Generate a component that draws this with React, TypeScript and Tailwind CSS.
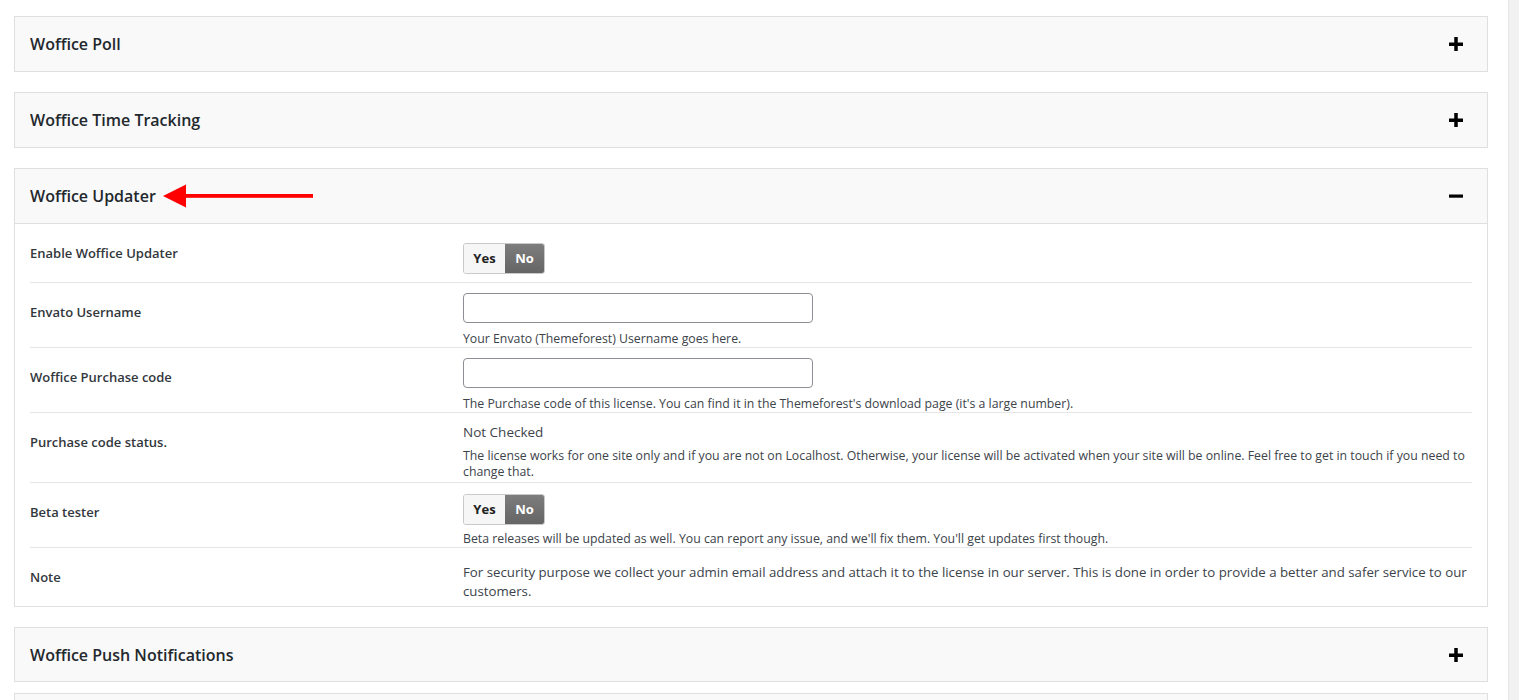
import React from 'react'

const font = { fontFamily: '"Open Sans", "Noto Sans", sans-serif' }

function PlusIcon() {
  return (
    <svg width="14" height="14" viewBox="0 0 14 14" className="block">
      <rect x="0" y="5.5" width="14" height="3.5" fill="#000" />
      <rect x="5.25" y="0" width="3.5" height="14" fill="#000" />
    </svg>
  )
}

function MinusIcon() {
  return (
    <svg width="14" height="14" viewBox="0 0 14 14" className="block">
      <rect x="0" y="5.5" width="14" height="3.2" fill="#000" />
    </svg>
  )
}

function Arrow() {
  // red annotation arrow pointing at the open section title
  return (
    <svg width="152" height="24" viewBox="0 0 152 24" className="block">
      <polygon points="0,12 23,0.5 23,23.5" fill="#ff0000" />
      <rect x="20" y="10" width="130" height="3.8" fill="#ff0000" />
    </svg>
  )
}

function Toggle() {
  return (
    <div className="inline-flex h-[31px] rounded-[3px] border border-[#c9c9c9] overflow-hidden text-[13px] font-bold">
      <span className="w-[41px] flex items-center justify-center bg-[#f6f6f6] text-[#222]">Yes</span>
      <span className="w-[39px] flex items-center justify-center bg-gradient-to-b from-[#7d7d7d] to-[#656565] text-white">
        No
      </span>
    </div>
  )
}

function Desc({ children }: { children: React.ReactNode }) {
  return <p className="text-[12.3px] leading-[17px] text-[#3c434a]">{children}</p>
}

function Row({
  label,
  children,
  valueClass,
  last,
}: {
  label: string
  children: React.ReactNode
  valueClass: string
  last?: boolean
}) {
  return (
    <div className={`grid grid-cols-[433px_1fr] ${last ? '' : 'border-b border-[#e6e6e6]'}`}>
      <div className="pt-[20px] text-[13px] leading-[18px] font-semibold text-[#32373c]">{label}</div>
      <div className={valueClass}>{children}</div>
    </div>
  )
}

function ClosedPanel({ title, className = '' }: { title?: string; className?: string }) {
  return (
    <div className={`border border-[#dfdfdf] bg-[#f9f9f9] ${className}`}>
      <div className="h-[54px] pl-[15px] pr-[24px] flex items-center justify-between">
        <h3 className="text-[16px] font-semibold text-[#23282d]">{title}</h3>
        {title && <PlusIcon />}
      </div>
    </div>
  )
}

export default function App() {
  return (
    <div className="h-[700px] overflow-hidden bg-white flex" style={font}>
      <div className="flex-1 pl-[14px] pr-[20px] pt-[16px] flex flex-col gap-[20px]">
        <ClosedPanel title="Woffice Poll" />
        <ClosedPanel title="Woffice Time Tracking" />

        {/* Open section */}
        <div className="border border-[#dfdfdf] bg-white">
          <div className="h-[55px] pl-[15px] pr-[24px] flex items-center justify-between bg-[#f9f9f9] border-b border-[#dfdfdf]">
            <div className="flex items-center gap-[7px]">
              <h3 className="text-[16px] font-semibold text-[#23282d]">Woffice Updater</h3>
              <Arrow />
            </div>
            <MinusIcon />
          </div>

          <div className="px-[15px]">
            <Row label="Enable Woffice Updater" valueClass="pt-[19px] pb-[8px]">
              <Toggle />
            </Row>

            <Row label="Envato Username" valueClass="pt-[10px]">
              <input className="block w-[350px] h-[30px] border border-[#8c8f94] rounded-[4px] bg-white" />
              <div className="mt-[7px]">
                <Desc>Your Envato (Themeforest) Username goes here.</Desc>
              </div>
            </Row>

            <Row label="Woffice Purchase code" valueClass="pt-[10px]">
              <input className="block w-[350px] h-[30px] border border-[#8c8f94] rounded-[4px] bg-white" />
              <div className="mt-[7px]">
                <Desc>
                  The Purchase code of this license. You can find it in the Themeforest's download page (it's a large
                  number).
                </Desc>
              </div>
            </Row>

            <Row label="Purchase code status." valueClass="pt-[10px] pb-[2px]">
              <p className="text-[13.5px] leading-[19px] text-[#3c434a]">Not Checked</p>
              <p className="mt-[6px] text-[12.3px] leading-[16px] text-[#3c434a]">
                The license works for one site only and if you are not on Localhost. Otherwise, your license will be
                activated when your site will be online. Feel free to get in touch if you need to change that.
              </p>
            </Row>

            <Row label="Beta tester" valueClass="pt-[11px]">
              <Toggle />
              <div className="mt-[5px]">
                <Desc>
                  Beta releases will be updated as well. You can report any issue, and we'll fix them. You'll get
                  updates first though.
                </Desc>
              </div>
            </Row>

            <Row label="Note" valueClass="pt-[15px] pb-[5px]" last>
              <p className="text-[13.25px] leading-[19px] text-[#3c434a]">
                For security purpose we collect your admin email address and attach it to the license in our server.
                This is done in order to provide a better and safer service to our customers.
              </p>
            </Row>
          </div>
        </div>

        <ClosedPanel title="Woffice Push Notifications" className="h-[55px]" />
        {/* next section, only its top edge is in view */}
        <ClosedPanel className="-mt-[9px]" />
      </div>
      <div className="w-[11px] shrink-0 bg-[#f1f1f1] border-l border-[#e6e6e6]" />
    </div>
  )
}
